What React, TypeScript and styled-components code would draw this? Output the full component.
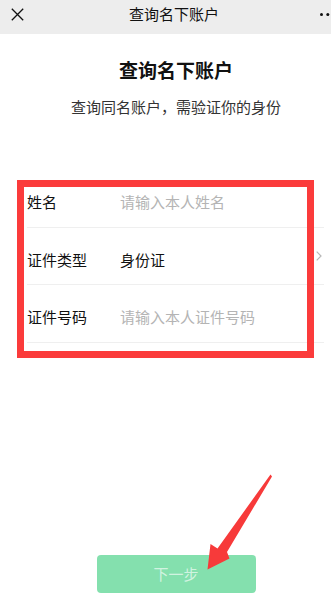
import React from "react";
import styled, { createGlobalStyle } from "styled-components";

const Global = createGlobalStyle`
  html, body {
    margin: 0;
    padding: 0;
    width: 331px;
    height: 604px;
    overflow: hidden;
    background: #ffffff;
  }
  body {
    font-family: "Noto Sans CJK SC", "Noto Sans", sans-serif;
    color: #111111;
  }
  * { box-sizing: border-box; }
`;

const Frame = styled.div`
  position: relative;
  width: 331px;
  height: 604px;
  display: flex;
  flex-direction: column;
  background: #ffffff;
`;

const NavBar = styled.header`
  height: 34px;
  background: #ededed;
  display: grid;
  grid-template-columns: 1fr auto 1fr;
  align-items: center;
  padding: 0 0 0 11px;
`;

const NavTitle = styled.div`
  font-size: 15px;
  line-height: 20px;
  color: #111111;
  margin-top: -6px;
  margin-left: 6px;
`;

const NavLeft = styled.div`
  display: flex;
  align-items: center;
  margin-top: -6px;
`;

const NavRight = styled.div`
  display: flex;
  justify-content: flex-end;
  margin-top: -6px;
`;

const Heading = styled.h1`
  margin: 23px 0 0;
  padding-left: 21px;
  text-align: center;
  font-size: 19px;
  line-height: 26px;
  font-weight: 700;
  color: #111111;
`;

const SubHeading = styled.p`
  margin: 13px 0 0;
  padding-left: 21px;
  text-align: center;
  font-size: 15px;
  line-height: 21px;
  color: #333333;
`;

const Form = styled.section`
  position: relative;
  margin-top: 53px;
  display: flex;
  flex-direction: column;
`;

const Row = styled.div`
  margin: 0 7px 0 27px;
  height: 57.5px;
  padding-top: 8px;
  display: flex;
  align-items: center;
  border-bottom: 1px solid #efefef;
`;

const Label = styled.span`
  width: 93px;
  flex: none;
  font-size: 15px;
  line-height: 20px;
  color: #111111;
`;

const Value = styled.span<{ $placeholder?: boolean }>`
  flex: 1;
  font-size: 15px;
  line-height: 20px;
  color: ${(p) => (p.$placeholder ? "#b4b4b4" : "#111111")};
`;

const Chevron = styled.svg`
  flex: none;
  width: 6px;
  height: 10px;
  margin-right: 2px;
  margin-top: -8px;
`;

const Highlight = styled.div`
  position: absolute;
  left: 17px;
  top: 9.5px;
  width: 297px;
  height: 178px;
  border: 7px solid #fb3b3b;
  pointer-events: none;
`;

const Footer = styled.div`
  margin-top: auto;
  margin-bottom: 11px;
  padding-left: 21px;
  display: flex;
  justify-content: center;
`;

const NextButton = styled.button`
  width: 159px;
  height: 38px;
  border: none;
  border-radius: 4px;
  background: #84e0ae;
  color: rgba(255, 255, 255, 0.65);
  font-family: inherit;
  font-size: 15px;
  line-height: 20px;
  padding: 0;
`;

const Arrow = styled.svg`
  position: absolute;
  left: 200px;
  top: 468px;
  width: 80px;
  height: 110px;
  pointer-events: none;
`;

export default function App() {
  return (
    <>
      <Global />
      <Frame>
        <NavBar>
          <NavLeft>
            <svg width="13" height="13" viewBox="0 0 13 13">
              <path d="M0.8 0.8 L12.2 12.2 M12.2 0.8 L0.8 12.2" stroke="#111" strokeWidth="1.3" fill="none" />
            </svg>
          </NavLeft>
          <NavTitle>查询名下账户</NavTitle>
          <NavRight>
            <svg width="11" height="3" viewBox="0 0 11 3">
              <circle cx="1.5" cy="1.5" r="1.5" fill="#111" />
              <circle cx="7.8" cy="1.5" r="1.5" fill="#111" />
              <circle cx="14.1" cy="1.5" r="1.5" fill="#111" />
            </svg>
          </NavRight>
        </NavBar>

        <Heading>查询名下账户</Heading>
        <SubHeading>查询同名账户，需验证你的身份</SubHeading>

        <Form>
          <Row>
            <Label>姓名</Label>
            <Value $placeholder>请输入本人姓名</Value>
          </Row>
          <Row>
            <Label>证件类型</Label>
            <Value>身份证</Value>
            <Chevron viewBox="0 0 6 10">
              <path d="M0.7 0.7 L5 5 L0.7 9.3" stroke="#b8b8b8" strokeWidth="1.2" fill="none" />
            </Chevron>
          </Row>
          <Row>
            <Label>证件号码</Label>
            <Value $placeholder>请输入本人证件号码</Value>
          </Row>
          <Highlight />
        </Form>

        <Footer>
          <NextButton>下一步</NextButton>
        </Footer>

        <Arrow viewBox="200 468 80 110">
          <polygon
            points="270.5,474.5 272,476.5 227,552 229.5,558.5 207.5,569.5 210.5,544 217.5,548.5"
            fill="#f73a3a"
          />
        </Arrow>
      </Frame>
    </>
  );
}
